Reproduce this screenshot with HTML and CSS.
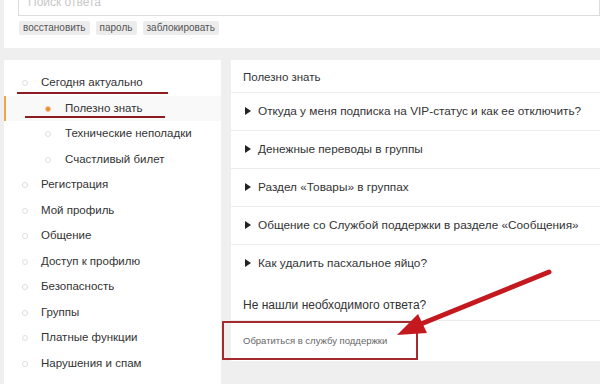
FILE: index.html
```
<!DOCTYPE html>
<html lang="ru">
<head>
  <meta charset="UTF-8" />
  <title>Помощь</title>
  <link rel="stylesheet" href="styles.css">
</head>
<body>

  <div class="search-card">
    <input type="text" class="search-input" placeholder="Поиск ответа" />
    <div class="tags">
      <span class="tag">восстановить</span>
      <span class="tag">пароль</span>
      <span class="tag">заблокировать</span>
    </div>
  </div>

  <div class="main">
    <ul class="menu">
      <li class="menu-item">Сегодня актуально</li>
      <li class="menu-item sub active">Полезно знать</li>
      <li class="menu-item sub">Технические неполадки</li>
      <li class="menu-item sub">Счастливый билет</li>
      <li class="menu-item">Регистрация</li>
      <li class="menu-item">Мой профиль</li>
      <li class="menu-item">Общение</li>
      <li class="menu-item">Доступ к профилю</li>
      <li class="menu-item">Безопасность</li>
      <li class="menu-item">Группы</li>
      <li class="menu-item">Платные функции</li>
      <li class="menu-item">Нарушения и спам</li>
      <li class="menu-item"></li>
    </ul>

    <div class="faq">
      <div class="faq-title">Полезно знать</div>
      <div class="faq-item">Откуда у меня подписка на VIP-статус и как ее отключить?</div>
      <div class="faq-item">Денежные переводы в группы</div>
      <div class="faq-item">Раздел «Товары» в группах</div>
      <div class="faq-item">Общение со Службой поддержки в разделе «Сообщения»</div>
      <div class="faq-item last">Как удалить пасхальное яйцо?</div>
      <div class="faq-question">Не нашли необходимого ответа?</div>
      <div class="faq-support">Обратиться в службу поддержки</div>
    </div>
  </div>

  <!-- пометки поверх скриншота -->
  <div class="mark-line mark-1"></div>
  <div class="mark-line mark-2"></div>
  <div class="mark-box"></div>
  <svg class="mark-arrow" width="600" height="384" viewBox="0 0 600 384">
    <line x1="549" y1="272" x2="416" y2="326" stroke="#c41a1f" stroke-width="5" stroke-linecap="round"/>
    <polygon points="397,335 418,314 427,333" fill="#c41a1f"/>
  </svg>

</body>
</html>
```
FILE: styles.css
```
body {
  margin: 0;
  padding-left: 4px;
  background-color: #efefef;
  font-family: "Liberation Sans", Arial, sans-serif;
  color: #333;
  overflow: hidden;
  height: 384px;
  position: relative;
}

.search-card {
  background: #fff;
  margin-top: -12px;
  padding: 0 0 13px 14px;
}

.search-input {
  display: block;
  width: 100%;
  height: 28px;
  box-sizing: border-box;
  border: 1px solid #dcdcdc;
  padding: 0 9px;
  font-family: inherit;
  font-size: 12px;
  color: #333;
}
.search-input::placeholder {
  color: #c8c8c8;
}

.tags {
  display: flex;
  gap: 6px;
  margin-top: 5px;
  padding-left: 1px;
}

.tag {
  background: #ececec;
  color: #555;
  font-size: 10px;
  line-height: 14px;
  padding: 0 4px;
  border-radius: 2px;
}

.main {
  display: flex;
  gap: 10px;
  margin-top: 12px;
  align-items: flex-start;
}

.menu {
  list-style: none;
  margin: 0;
  padding: 10px 0 0 0;
  width: 217px;
  flex-shrink: 0;
  background: #fff;
  height: 330px;
}

.menu-item {
  position: relative;
  height: 25.5px;
  line-height: 25.5px;
  font-size: 11.5px;
  padding-left: 37px;
  color: #333;
}
.menu-item::before {
  content: "";
  position: absolute;
  left: 18px;
  top: 10px;
  width: 4px;
  height: 4px;
  border: 1px solid #dedede;
  border-radius: 50%;
}

.menu-item.sub {
  padding-left: 61px;
}
.menu-item.sub::before {
  left: 41px;
}

.menu-item.active {
  background: #f9f9f9;
  box-shadow: inset 2px 0 0 #f0a64e;
}
.menu-item.active::before {
  background: #ef8a2a;
  border-color: #f6c48f;
}

.faq {
  flex: 1;
  background: #fff;
  white-space: nowrap;
}

.faq-title {
  font-size: 11.5px;
  line-height: 30px;
  padding: 2px 0 0 12px;
  border-bottom: 1px solid #ececec;
}

.faq-item {
  font-size: 11.8px;
  line-height: 37px;
  padding-left: 14px;
  border-bottom: 1px solid #ececec;
}
.faq-item::before {
  content: "";
  display: inline-block;
  border-left: 6px solid #222;
  border-top: 4px solid transparent;
  border-bottom: 4px solid transparent;
  margin-right: 7px;
  vertical-align: 0;
}
.faq-item.last {
  border-bottom: none;
}

.faq-question {
  font-size: 12px;
  padding: 16px 0 8px 12px;
  line-height: 14px;
  border-bottom: 1px solid #ececec;
}

.faq-support {
  font-size: 9.5px;
  color: #666;
  padding-left: 12px;
  line-height: 40px;
}

.mark-line {
  position: absolute;
  height: 2px;
  background: #8e1d22;
}
.mark-1 {
  left: 17px;
  top: 92px;
  width: 151px;
}
.mark-2 {
  left: 25px;
  top: 116px;
  width: 140px;
}

.mark-box {
  position: absolute;
  left: 222px;
  top: 321px;
  width: 192px;
  height: 35px;
  border: 2px solid #a42a2e;
}

.mark-arrow {
  position: absolute;
  left: 0;
  top: 0;
}
```
